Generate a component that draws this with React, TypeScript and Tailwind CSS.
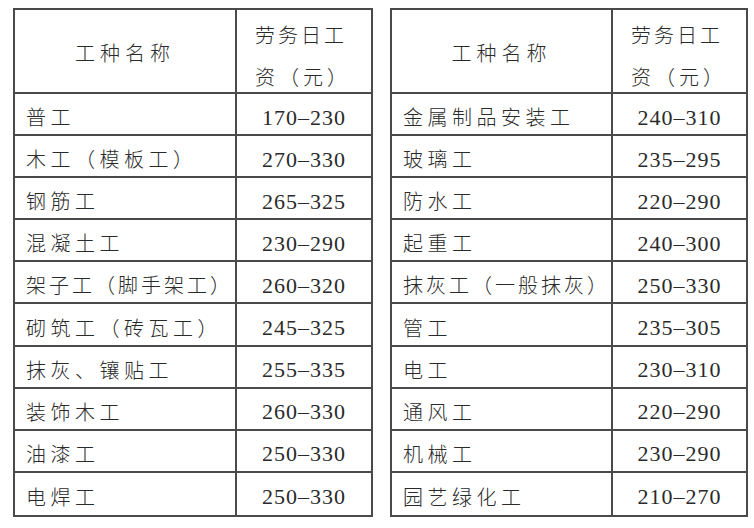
const left: [string, string][] = [
  ["普工", "170–230"],
  ["木工（模板工）", "270–330"],
  ["钢筋工", "265–325"],
  ["混凝土工", "230–290"],
  ["架子工（脚手架工）", "260–320"],
  ["砌筑工（砖瓦工）", "245–325"],
  ["抹灰、镶贴工", "255–335"],
  ["装饰木工", "260–330"],
  ["油漆工", "250–330"],
  ["电焊工", "250–330"],
];

const right: [string, string][] = [
  ["金属制品安装工", "240–310"],
  ["玻璃工", "235–295"],
  ["防水工", "220–290"],
  ["起重工", "240–300"],
  ["抹灰工（一般抹灰）", "250–330"],
  ["管工", "235–305"],
  ["电工", "230–310"],
  ["通风工", "220–290"],
  ["机械工", "230–290"],
  ["园艺绿化工", "210–270"],
];

const cjk = "font-['Noto_Sans_CJK_SC',sans-serif] font-light";

function WageTable({ rows, last }: { rows: [string, string][]; last?: boolean }) {
  return (
    <div
      className={`grid grid-rows-[84px_repeat(10,42.1px)] border-2 border-[#4a4a4a] text-[#2a2a2a] ${
        last ? "grid-cols-[221px_133px]" : "grid-cols-[222px_134px]"
      }`}
    >
      {/* header */}
      <div className={`flex items-center justify-center border-r-2 border-b-2 border-[#4a4a4a] pt-1 text-[20px] tracking-[5px] ${cjk}`}>
        工种名称
      </div>
      <div className={`border-b-2 border-[#4a4a4a] pl-[18px] pt-[6px] text-[20px] tracking-[3px] ${cjk}`}>
        <div className="leading-[38px]">劳务日工</div>
        <div className="leading-[46px] tracking-[4px]">资（元）</div>
      </div>

      {rows.map(([name, wage], i) => (
        <div key={name} className="contents">
          <div
            className={`flex items-center whitespace-nowrap border-r-2 border-[#4a4a4a] pl-[11px] pt-[6px] text-[20px] ${cjk} ${
              name.length > 8 ? "tracking-[3px]" : "tracking-[4.5px]"
            } ${i < rows.length - 1 ? "border-b-2" : ""}`}
          >
            {name}
          </div>
          <div
            className={`flex items-center justify-center border-[#4a4a4a] pt-[6px] font-['Liberation_Serif',serif] text-[22px] tracking-[1px] text-[#2a2a2a] ${
              i < rows.length - 1 ? "border-b-2" : ""
            }`}
          >
            {wage}
          </div>
        </div>
      ))}
    </div>
  );
}

export default function App() {
  return (
    <div className="flex h-[528px] w-[754px] items-start gap-[17px] bg-white pl-[13px] pt-[8px]">
      <WageTable rows={left} />
      <WageTable rows={right} last />
    </div>
  );
}
